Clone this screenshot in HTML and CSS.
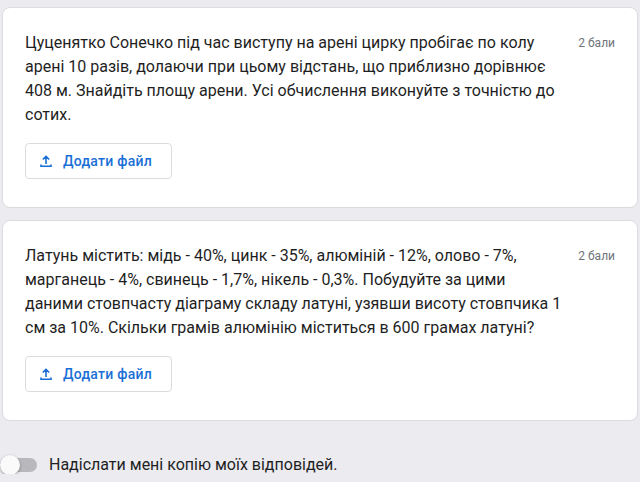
FILE: index.html
```html
<!DOCTYPE html>
<html lang="uk">
<head>
    <meta charset="UTF-8">
    <meta name="viewport" content="width=device-width, initial-scale=1.0">
    <title>Форма</title>
    <link rel="stylesheet" href="styles.css">
</head>
<body>
    <div class="card">
        <div class="question">
            <div class="question-text">Цуценятко Сонечко під час виступу на арені цирку пробігає по колу арені 10 разів, долаючи при цьому відстань, що приблизно дорівнює 408 м. Знайдіть площу арени. Усі обчислення виконуйте з точністю до сотих.</div>
            <div class="points">2 бали</div>
        </div>
        <button class="upload-btn">
            <svg class="upload-icon" viewBox="0 0 16 16" width="16" height="16">
                <path d="M8 11V3.5M4.8 6.5L8 3.3l3.2 3.2M3 11.5v1.8h10v-1.8" fill="none" stroke="#1a6fd6" stroke-width="1.6"/>
            </svg>
            Додати файл
        </button>
    </div>

    <div class="card">
        <div class="question">
            <div class="question-text">Латунь містить: мідь - 40%, цинк - 35%, алюміній - 12%, олово - 7%, марганець - 4%, свинець - 1,7%, нікель - 0,3%. Побудуйте за цими даними стовпчасту діаграму складу латуні, узявши висоту стовпчика 1 см за 10%. Скільки грамів алюмінію міститься в 600 грамах латуні?</div>
            <div class="points">2 бали</div>
        </div>
        <button class="upload-btn">
            <svg class="upload-icon" viewBox="0 0 16 16" width="16" height="16">
                <path d="M8 11V3.5M4.8 6.5L8 3.3l3.2 3.2M3 11.5v1.8h10v-1.8" fill="none" stroke="#1a6fd6" stroke-width="1.6"/>
            </svg>
            Додати файл
        </button>
    </div>

    <div class="copy-row">
        <span class="toggle"><span class="toggle-thumb"></span></span>
        <span>Надіслати мені копію моїх відповідей.</span>
    </div>
</body>
</html>
```

FILE: styles.css
```css
body {
    margin: 0;
    padding: 7px 2px 0 2px;
    background-color: #ebebf0;
    font-family: Roboto, "Liberation Sans", Arial, sans-serif;
    color: #1f1f1f;
}
.card {
    background-color: #fff;
    border: 1px solid #dadce0;
    border-radius: 8px;
    padding: 23px 22px 28px 22px;
    margin-bottom: 12px;
}
.question {
    display: flex;
    align-items: flex-start;
}
.question-text {
    flex: 1;
    font-size: 16px;
    line-height: 24px;
}
.points {
    font-size: 12px;
    color: #70757a;
    margin-left: 16px;
    line-height: 24px;
    white-space: nowrap;
}
.upload-btn {
    display: flex;
    align-items: center;
    gap: 9px;
    margin-top: 16px;
    height: 36px;
    width: 147px;
    padding: 0 12px;
    background-color: #fff;
    border: 1px solid #dadce0;
    border-radius: 4px;
    font-family: Roboto, "Liberation Sans", Arial, sans-serif;
    font-size: 14px;
    font-weight: 500;
    color: #1a6fd6;
    letter-spacing: 0.25px;
}
.upload-icon {
    flex-shrink: 0;
}
.copy-row {
    display: flex;
    align-items: center;
    gap: 12px;
    margin: 34px 0 0 -2px;
    font-size: 16px;
}
.toggle {
    position: relative;
    width: 37px;
    height: 14px;
    border-radius: 7px;
    background-color: #b9b9bd;
}
.toggle-thumb {
    position: absolute;
    left: 0;
    top: -3px;
    width: 20px;
    height: 20px;
    border-radius: 50%;
    background-color: #fafafa;
    box-shadow: 0 1px 3px rgba(0, 0, 0, 0.35);
}
```
